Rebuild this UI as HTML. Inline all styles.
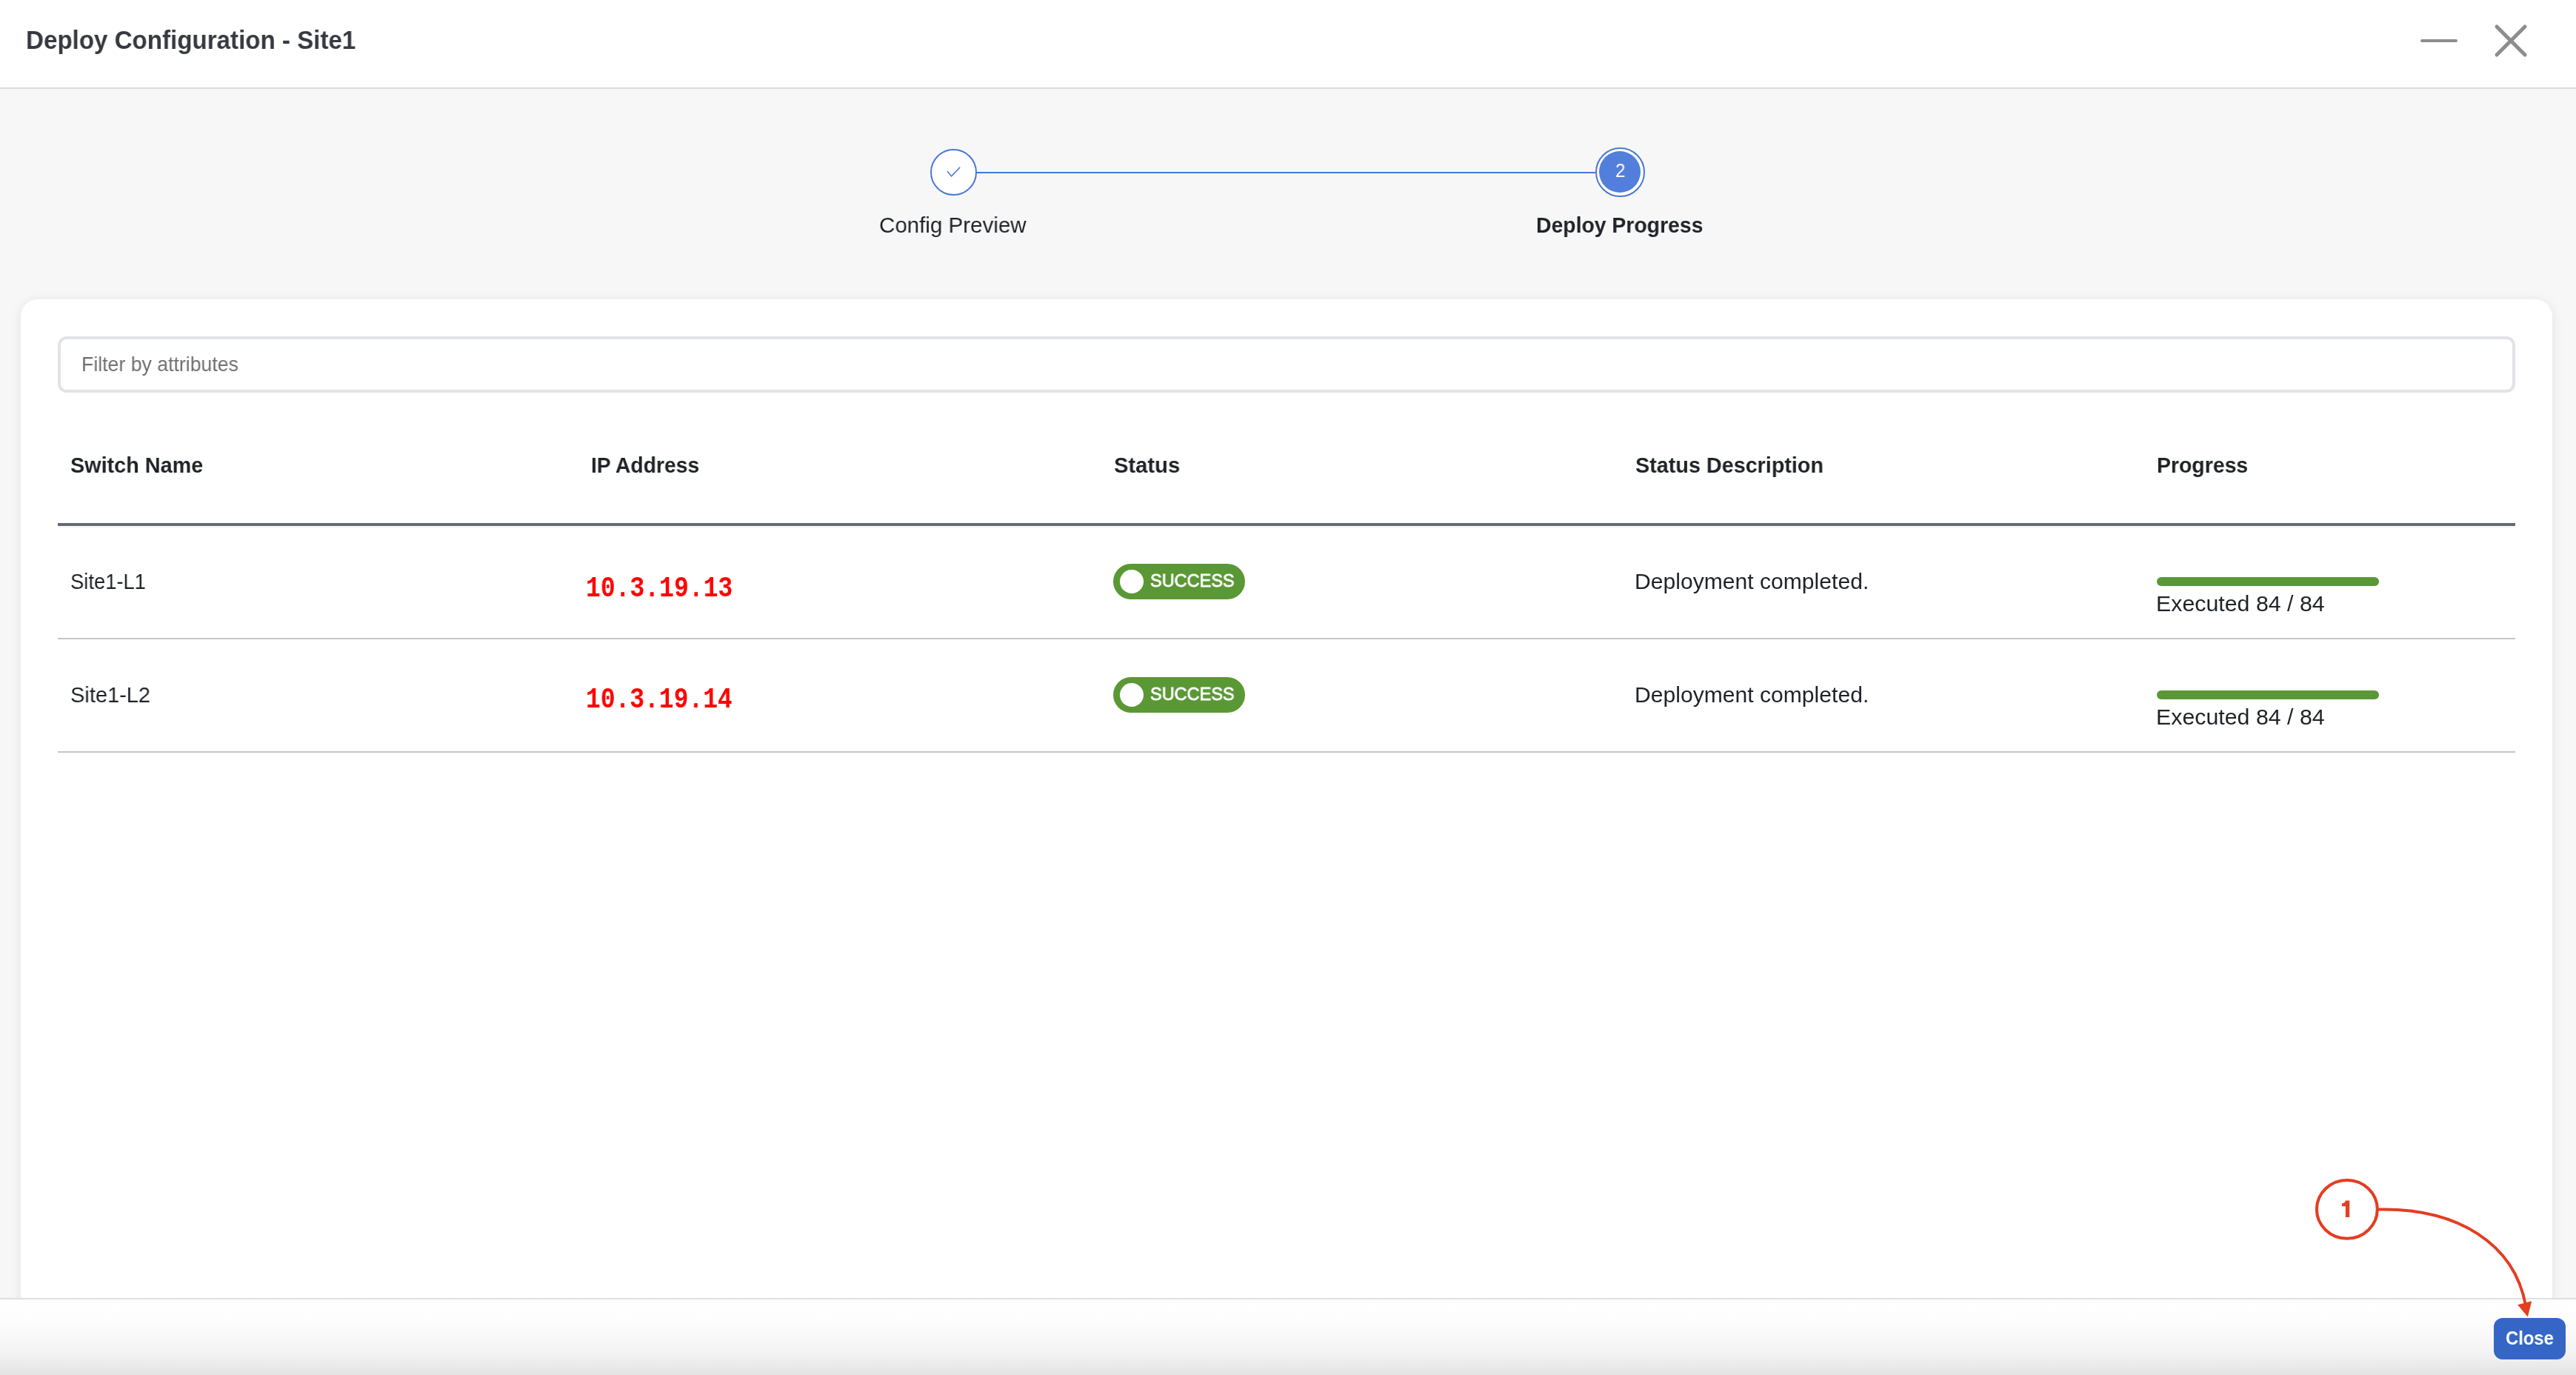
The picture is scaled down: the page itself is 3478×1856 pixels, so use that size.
<!DOCTYPE html>
<html><head><meta charset="utf-8"><title>Deploy Configuration - Site1</title>
<style>
html,body{margin:0;padding:0;width:3478px;height:1856px;overflow:hidden;background:#f7f7f7;font-family:"Liberation Sans", sans-serif;}
.t{position:absolute;line-height:1;white-space:pre;transform-origin:0 0;will-change:transform;font-family:"Liberation Sans", sans-serif;}
</style></head><body>
<div style="position:absolute;left:0;top:0;width:3478px;height:118px;background:#fff;border-bottom:2px solid #dcdcdc"></div>
<div class="t" style="left:34.93px;top:36.94px;font-size:35.51px;font-weight:700;color:#363a40;transform:scaleX(0.9330);">Deploy Configuration - Site1</div>
<div style="position:absolute;left:3268px;top:53px;width:50px;height:4px;border-radius:2px;background:#8d8d8d"></div>
<svg style="position:absolute;left:3360px;top:25px" width="60" height="60" viewBox="3360 25 60 60"><path d="M3371 36 L3409 74 M3409 36 L3371 74" stroke="#8d8d8d" stroke-width="5" stroke-linecap="round"/></svg>
<div style="position:absolute;left:1318px;top:231.5px;width:836px;height:2px;background:#4a78d8"></div>
<div style="position:absolute;left:1255.5px;top:200.5px;width:59px;height:59px;border:2px solid #4a78d8;border-radius:50%;background:#fff"></div>
<svg style="position:absolute;left:1270px;top:215px" width="35" height="35" viewBox="1270 215 35 35"><path d="M1279 231.3 L1284.6 237.9 L1296.2 225.8" fill="none" stroke="#4a78d8" stroke-width="1.6"/></svg>
<div style="position:absolute;left:2153.5px;top:198.5px;width:63px;height:63px;border:2px solid #4a78d8;border-radius:50%;background:#fff"></div>
<div style="position:absolute;left:2158.7px;top:203.7px;width:56.6px;height:56.6px;border-radius:50%;background:#527edc"></div>
<div class="t" style="left:2180.57px;top:218.43px;font-size:25.36px;font-weight:400;color:#fff;transform:scaleX(0.9505);">2</div>
<div class="t" style="left:1186.62px;top:288.81px;font-size:30.00px;font-weight:400;color:#1f2328;transform:scaleX(0.9845);">Config Preview</div>
<div class="t" style="left:2074.03px;top:288.81px;font-size:30.00px;font-weight:700;color:#1f2328;transform:scaleX(0.9455);">Deploy Progress</div>
<div style="position:absolute;left:28px;top:404px;width:3418px;height:1600px;background:#fff;border-radius:23px;box-shadow:0 2px 16px rgba(0,0,0,0.09)"></div>
<div style="position:absolute;left:78px;top:454px;width:3318px;height:76px;box-sizing:border-box;border:4px solid #e1e3e8;border-radius:12px;background:#fff"></div>
<div class="t" style="left:110.02px;top:477.74px;font-size:27.25px;font-weight:400;color:#707070;transform:scaleX(0.9782);">Filter by attributes</div>
<div class="t" style="left:94.55px;top:612.54px;font-size:30.07px;font-weight:700;color:#1f2328;transform:scaleX(0.9572);">Switch Name</div>
<div class="t" style="left:798.23px;top:612.54px;font-size:30.07px;font-weight:700;color:#1f2328;transform:scaleX(0.9399);">IP Address</div>
<div class="t" style="left:1503.64px;top:612.54px;font-size:30.07px;font-weight:700;color:#1f2328;transform:scaleX(0.9699);">Status</div>
<div class="t" style="left:2208.30px;top:612.54px;font-size:30.07px;font-weight:700;color:#1f2328;transform:scaleX(0.9563);">Status Description</div>
<div class="t" style="left:2911.72px;top:612.54px;font-size:30.07px;font-weight:700;color:#1f2328;transform:scaleX(0.9448);">Progress</div>
<div style="position:absolute;left:78px;top:706px;width:3318px;height:4px;background:#646a72"></div>
<div style="position:absolute;left:78px;top:711px;width:3318px;height:1px;background:#f0f0f0"></div>
<div class="t" style="left:94.74px;top:769.85px;font-size:29.71px;font-weight:400;color:#1f2328;transform:scaleX(0.9214);">Site1-L1</div>
<div class="t" style="left:2206.90px;top:769.85px;font-size:29.71px;font-weight:400;color:#1f2328;transform:scaleX(1.0135);">Deployment completed.</div>
<div style="position:absolute;left:2912px;top:779px;width:300px;height:12px;border-radius:6px;background:#5a9835"></div>
<div class="t" style="left:2911.03px;top:799.73px;font-size:29.86px;font-weight:400;color:#1f2328;transform:scaleX(1.0158);">Executed 84 / 84</div>
<div style="position:absolute;left:1503px;top:761px;width:178px;height:48px;border-radius:24px;background:#5a9835"></div>
<div style="position:absolute;left:1512px;top:769px;width:32px;height:32px;border-radius:50%;background:#fff"></div>
<div class="t" style="left:1552.81px;top:771.91px;font-size:24.20px;font-weight:400;color:#fff;transform:scaleX(0.9719);-webkit-text-stroke:0.8px #fff;">SUCCESS</div>
<div style="position:absolute;left:78px;top:861px;width:3318px;height:2px;background:#c6c6c6"></div>
<div class="t" style="left:94.69px;top:922.85px;font-size:29.71px;font-weight:400;color:#1f2328;transform:scaleX(0.9767);">Site1-L2</div>
<div class="t" style="left:2206.90px;top:922.85px;font-size:29.71px;font-weight:400;color:#1f2328;transform:scaleX(1.0135);">Deployment completed.</div>
<div style="position:absolute;left:2912px;top:932px;width:300px;height:12px;border-radius:6px;background:#5a9835"></div>
<div class="t" style="left:2911.03px;top:952.73px;font-size:29.86px;font-weight:400;color:#1f2328;transform:scaleX(1.0158);">Executed 84 / 84</div>
<div style="position:absolute;left:1503px;top:914px;width:178px;height:48px;border-radius:24px;background:#5a9835"></div>
<div style="position:absolute;left:1512px;top:922px;width:32px;height:32px;border-radius:50%;background:#fff"></div>
<div class="t" style="left:1552.81px;top:924.91px;font-size:24.20px;font-weight:400;color:#fff;transform:scaleX(0.9719);-webkit-text-stroke:0.8px #fff;">SUCCESS</div>
<div style="position:absolute;left:78px;top:1014px;width:3318px;height:2px;background:#c6c6c6"></div>
<div class="t" style="left:790.93px;top:775.68px;font-size:38.26px;font-weight:700;color:#ff0000;font-family:'Liberation Mono', monospace;transform:scaleX(0.8638);">10.3.19.13</div>
<div class="t" style="left:790.94px;top:925.68px;font-size:38.26px;font-weight:700;color:#ff0000;font-family:'Liberation Mono', monospace;transform:scaleX(0.8615);">10.3.19.14</div>
<div style="position:absolute;left:0;top:1752px;width:3478px;height:104px;background:linear-gradient(#fff 0%,#fdfdfd 30%,#f3f3f3 70%,#e2e2e2 100%);border-top:2px solid #dddfe6"></div>
<div style="position:absolute;left:3367px;top:1779px;width:97px;height:56px;border-radius:12px;background:#3566c5"></div>
<div class="t" style="left:3382.96px;top:1793.61px;font-size:25.51px;font-weight:700;color:#fff;transform:scaleX(0.9334);">Close</div>
<svg style="position:absolute;left:3100px;top:1570px" width="378" height="230" viewBox="3100 1570 378 230"><ellipse cx="3168.86" cy="1632.35" rx="40.95" ry="39.4" fill="none" stroke="#e43d22" stroke-width="4.1"/><path d="M3209.8 1632.6 C3320 1630 3395 1680 3410 1762" fill="none" stroke="#e43d22" stroke-width="4"/><path d="M3399.2 1761.3 L3418.2 1756.3 L3412.8 1777.4 Z" fill="#e43d22"/><path d="M3166.9 1620.6 L3172.2 1620.6 L3172.2 1643.1 L3166.9 1643.1 L3166.9 1628.2 L3161.9 1628.2 L3161.9 1624.4 C3164.5 1624.4 3166.3 1623.2 3166.9 1620.6 Z" fill="#e43d22"/></svg>
</body></html>
